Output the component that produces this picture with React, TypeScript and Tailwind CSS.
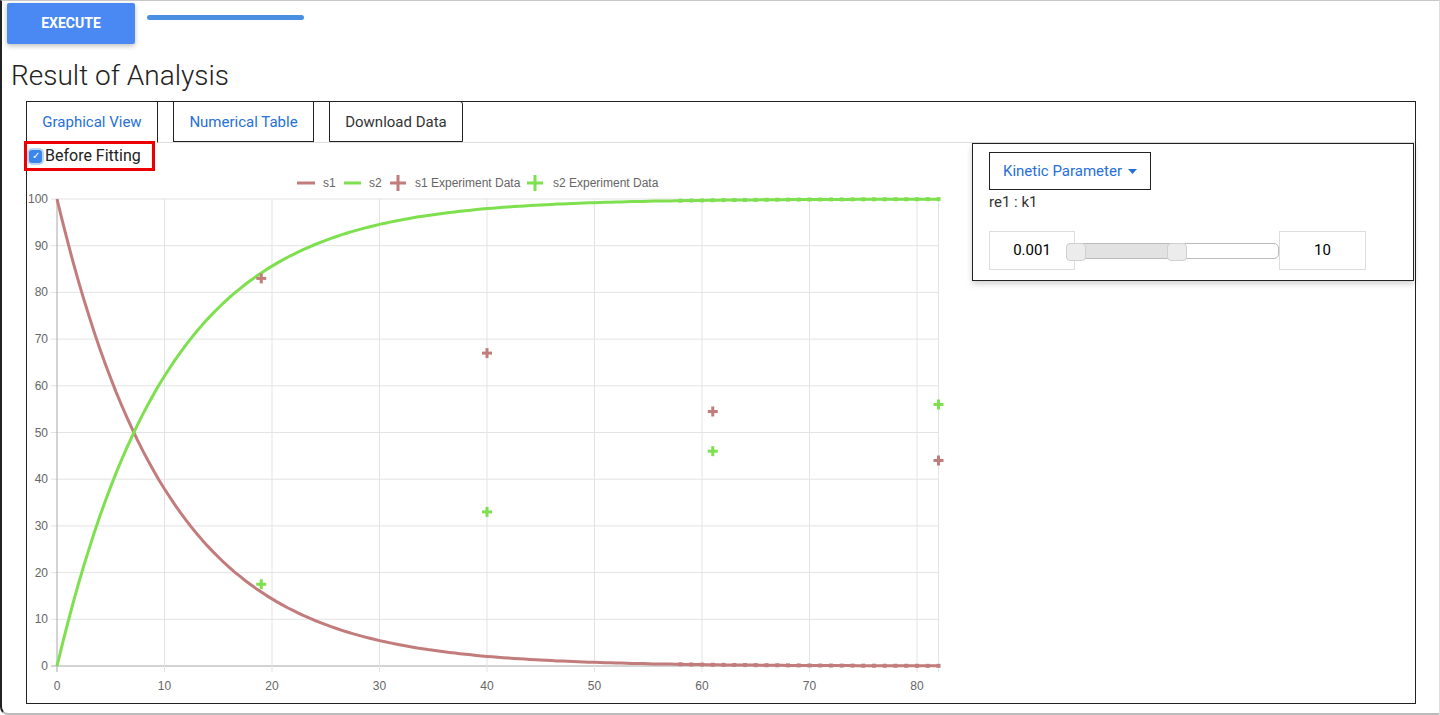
import React from "react";

const S1 = "#c27c7c";
const S2 = "#7ee04f";

const K = 0.097;
const X0 = 30;
const XU = 10.75;
const YTOP = 28;
const YBOT = 495;
const px = (t: number) => X0 + t * XU;
const py = (v: number) => YBOT - (v / 100) * (YBOT - YTOP);

const ts: number[] = [];
for (let t = 0; t <= 82; t += 0.5) ts.push(t);
const curve = (f: (t: number) => number) =>
  ts.map((t) => `${px(t).toFixed(1)},${py(f(t)).toFixed(1)}`).join(" ");
const s1 = (t: number) => 100 * Math.exp(-K * t);
const s2 = (t: number) => 100 - s1(t);

const exp1 = [
  [19, 83],
  [40, 67],
  [61, 54.5],
  [82, 44],
];
const exp2 = [
  [19, 17.5],
  [40, 33],
  [61, 46],
  [82, 56],
];

function Cross({ x, y, color, r = 5 }: { x: number; y: number; color: string; r?: number }) {
  return (
    <g stroke={color} strokeWidth="3">
      <line x1={x - r} y1={y} x2={x + r} y2={y} />
      <line x1={x} y1={y - r} x2={x} y2={y + r} />
    </g>
  );
}

function Chart() {
  const yTicks = [0, 10, 20, 30, 40, 50, 60, 70, 80, 90, 100];
  const xTicks = [0, 10, 20, 30, 40, 50, 60, 70, 80];
  const xEnd = px(82);
  const markers: number[] = [];
  for (let t = 58; t <= 82; t += 1) markers.push(t);
  return (
    <svg width="945" height="530" className="block" style={{ fontFamily: '"Liberation Sans", Arial, sans-serif' }}>
      {/* legend */}
      <g fontSize="12" fill="#666">
        <line x1="270" y1="12" x2="288" y2="12" stroke={S1} strokeWidth="3" />
        <text x="296" y="16">s1</text>
        <line x1="317" y1="12" x2="334" y2="12" stroke={S2} strokeWidth="3" />
        <text x="342" y="16">s2</text>
        <Cross x={371} y={12} color={S1} r={8} />
        <text x="388" y="16">s1 Experiment Data</text>
        <Cross x={508} y={12} color={S2} r={8} />
        <text x="526" y="16">s2 Experiment Data</text>
      </g>
      {/* grid */}
      {yTicks.map((v) => (
        <g key={v}>
          <line x1={X0 - 6} y1={py(v)} x2={xEnd} y2={py(v)} stroke={v === 0 ? "#a8a8a8" : "#e3e3e3"} />
          <text x={X0 - 9} y={py(v) + 4} fontSize="12" fill="#666" textAnchor="end">
            {v}
          </text>
        </g>
      ))}
      {xTicks.map((t) => (
        <g key={t}>
          <line x1={px(t)} y1={YTOP} x2={px(t)} y2={YBOT + 6} stroke={t === 0 ? "#a8a8a8" : "#e3e3e3"} />
          <text x={px(t)} y={YBOT + 24} fontSize="12" fill="#666" textAnchor="middle">
            {t}
          </text>
        </g>
      ))}
      <line x1={xEnd} y1={YTOP} x2={xEnd} y2={YBOT + 6} stroke="#e3e3e3" />
      {/* curves */}
      <polyline points={curve(s1)} fill="none" stroke={S1} strokeWidth="3" strokeLinejoin="round" />
      <polyline points={curve(s2)} fill="none" stroke={S2} strokeWidth="3" strokeLinejoin="round" />
      {markers.map((t) => (
        <g key={t}>
          <rect x={px(t) - 2} y={py(s1(t)) - 2} width="4" height="4" fill={S1} />
          <rect x={px(t) - 2} y={py(s2(t)) - 2} width="4" height="4" fill={S2} />
        </g>
      ))}
      {exp1.map(([t, v]) => (
        <Cross key={"a" + t} x={px(t)} y={py(v)} color={S1} />
      ))}
      {exp2.map(([t, v]) => (
        <Cross key={"b" + t} x={px(t)} y={py(v)} color={S2} />
      ))}
    </svg>
  );
}

export default function App() {
  return (
    <div
      className="h-[715px] w-[1440px] overflow-hidden bg-white border-t border-t-[#c8c8c8] border-l-2 border-l-[#222] border-b-2 border-b-[#bbb] border-r border-r-[#ddd] rounded-bl-[8px]"
      style={{ fontFamily: 'Roboto, "Liberation Sans", Arial, sans-serif' }}
    >
      {/* top bar */}
      <div className="flex items-start gap-3 pl-[5px] pt-[2px]">
        <button className="h-[41px] w-[128px] rounded-[2px] bg-[#4a89f3] text-[14px] font-bold text-white shadow-[0_2px_5px_rgba(0,0,0,0.25)]">
          EXECUTE
        </button>
        <div className="mt-[12px] h-[5px] w-[157px] rounded-full bg-[#4a90e2]" />
      </div>

      <h1 className="ml-[9px] mt-[15px] text-[28px] font-light leading-[34px] text-[#222]">Result of Analysis</h1>

      {/* main panel */}
      <div className="ml-[24px] mt-[8px] h-[603px] w-[1390px] border border-[#222]">
        {/* tabs */}
        <div className="-mt-px -ml-px flex h-[42px] items-stretch border-b border-b-[#ddd]">
          <div className="-mb-px flex w-[132px] items-center justify-center border border-b-white border-[#222] bg-white pt-px text-[15px] text-[#2670d8]">
            Graphical View
          </div>
          <div className="ml-[15px] flex w-[141px] items-center justify-center border border-[#222] pt-px text-[15px] text-[#2670d8]">
            Numerical Table
          </div>
          <div className="ml-[15px] flex w-[134px] items-center justify-center rounded-tr-[3px] border border-[#222] pt-px text-[15px] text-[#333]">
            Download Data
          </div>
        </div>

        <div className="flex">
          {/* chart column */}
          <div className="w-[945px]">
            <div className="relative -ml-[3px] -mt-[2px] flex h-[30px] w-[131px] items-center gap-[3px] border-[3px] border-[#ee0000] pl-[2px]">
              <span className="flex h-[13px] w-[13px] items-center justify-center rounded-[3px] bg-[#3b86e8] text-[10px] leading-none text-white shadow-[0_0_0_2px_rgba(59,134,232,0.35)]">
                ✓
              </span>
              <span className="text-[16px] text-[#222]">Before Fitting</span>
            </div>
            <Chart />
          </div>

          {/* kinetic card */}
          <div className="h-[138px] w-[442px] border border-[#222] bg-white pl-[16px] pt-[8px] shadow-[0_3px_6px_rgba(0,0,0,0.18)]">
            <button className="flex h-[38px] w-[162px] items-center justify-center gap-[6px] border border-[#222] text-[15px] text-[#2670d8]">
              Kinetic Parameter
              <svg width="9" height="5" viewBox="0 0 9 5">
                <path d="M0 0h9L4.5 5z" fill="#2670d8" />
              </svg>
            </button>
            <div className="mt-[2px] text-[15px] leading-[20px] text-[#333]">re1 : k1</div>
            <div className="mt-[19px] flex items-center">
              <div className="flex h-[39px] w-[86px] items-center justify-center border border-[#ddd] text-[15px] text-black">
                0.001
              </div>
              <div className="relative -ml-[9px] h-[16px] w-[213px] rounded-[5px] border border-[#bbb] bg-white">
                <div className="absolute left-0 top-0 h-full w-[110px] rounded-l-[5px] bg-[#e2e2e2]" />
                <div className="absolute -top-[1px] left-[-1px] h-[18px] w-[20px] rounded-[4px] border border-[#d0d0d0] bg-[#ececec]" />
                <div className="absolute -top-[1px] left-[100px] h-[18px] w-[20px] rounded-[4px] border border-[#d0d0d0] bg-[#ececec]" />
              </div>
              <div className="flex h-[39px] w-[87px] items-center justify-center border border-[#ddd] text-[15px] text-black">
                10
              </div>
            </div>
          </div>
        </div>
      </div>
    </div>
  );
}
